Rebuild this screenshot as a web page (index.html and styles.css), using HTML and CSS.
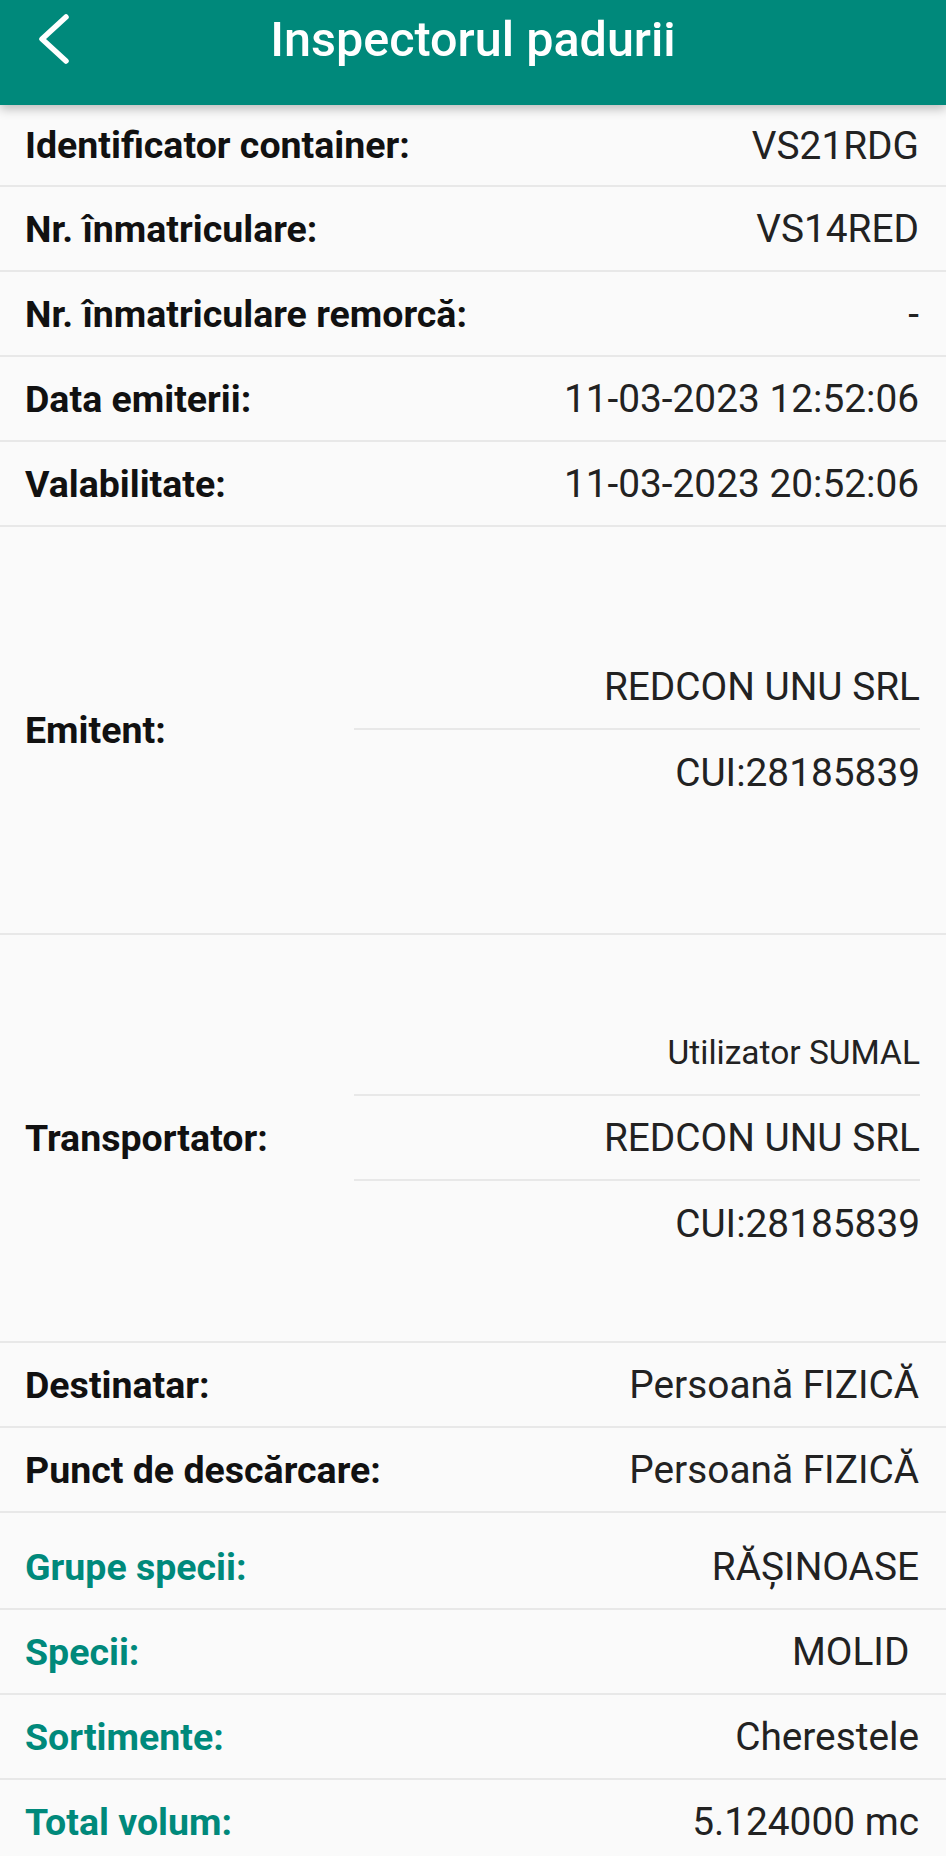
FILE: index.html
```html
<!DOCTYPE html>
<html lang="ro">
<head>
    <meta charset="UTF-8">
    <meta name="viewport" content="width=device-width, initial-scale=1.0">
    <title>Inspectorul padurii</title>
    <link rel="stylesheet" href="styles.css">
</head>
<body>
    <header class="topbar">
        <button class="back" type="button" aria-label="Înapoi">
            <svg width="34" height="52" viewBox="0 0 34 52">
                <polyline points="30,4 6,26 30,48" fill="none" stroke="#fff" stroke-width="5.5" stroke-linecap="round" stroke-linejoin="round"/>
            </svg>
        </button>
        <h1>Inspectorul padurii</h1>
        <span></span>
    </header>
    <main class="details">
        <div class="row first">
            <span class="label">Identificator container:</span>
            <span class="value">VS21RDG</span>
        </div>
        <div class="row">
            <span class="label">Nr. înmatriculare:</span>
            <span class="value">VS14RED</span>
        </div>
        <div class="row">
            <span class="label">Nr. înmatriculare remorcă:</span>
            <span class="value">-</span>
        </div>
        <div class="row">
            <span class="label">Data emiterii:</span>
            <span class="value">11-03-2023 12:52:06</span>
        </div>
        <div class="row">
            <span class="label">Valabilitate:</span>
            <span class="value">11-03-2023 20:52:06</span>
        </div>
        <div class="row block">
            <span class="label">Emitent:</span>
            <div class="sublist">
                <div class="subitem">REDCON UNU SRL</div>
                <div class="subitem">CUI:28185839</div>
            </div>
        </div>
        <div class="row block">
            <span class="label">Transportator:</span>
            <div class="sublist">
                <div class="subitem small">Utilizator SUMAL</div>
                <div class="subitem">REDCON UNU SRL</div>
                <div class="subitem">CUI:28185839</div>
            </div>
        </div>
        <div class="row">
            <span class="label">Destinatar:</span>
            <span class="value">Persoană FIZICĂ</span>
        </div>
        <div class="row">
            <span class="label">Punct de descărcare:</span>
            <span class="value">Persoană FIZICĂ</span>
        </div>
        <div class="row green top-gap">
            <span class="label">Grupe specii:</span>
            <span class="value">RĂȘINOASE</span>
        </div>
        <div class="row green">
            <span class="label">Specii:</span>
            <span class="value">MOLID&nbsp;</span>
        </div>
        <div class="row green">
            <span class="label">Sortimente:</span>
            <span class="value">Cherestele</span>
        </div>
        <div class="row green">
            <span class="label">Total volum:</span>
            <span class="value">5.124000 mc</span>
        </div>
    </main>
</body>
</html>
```

FILE: styles.css
```css
body {
    margin: 0;
    padding: 0;
    font-family: Roboto, "Noto Sans", sans-serif;
    background-color: #fafafa;
    color: #222;
}
.topbar {
    position: relative;
    z-index: 2;
    height: 105px;
    background: #00897b;
    display: grid;
    grid-template-columns: 1fr auto 1fr;
    align-items: start;
    box-shadow: 0 4px 10px rgba(0, 0, 0, 0.25);
}
.back {
    justify-self: start;
    margin: 13px 0 0 36px;
    padding: 0;
    border: none;
    background: none;
    line-height: 0;
    cursor: pointer;
}
.topbar h1 {
    margin: 0;
    padding-top: 12px;
    font-size: 48.5px;
    line-height: 56px;
    font-weight: 500;
    color: #fff;
}
.details {
    margin: 0;
}
.row {
    box-sizing: border-box;
    height: 85px;
    padding: 0 27px 0 25px;
    display: flex;
    align-items: center;
    justify-content: space-between;
    border-bottom: 2px solid #e8e8e8;
}
.row.first {
    height: 82px;
}
.label {
    font-size: 37.5px;
    font-weight: 700;
    color: #111;
    white-space: nowrap;
}
.value {
    font-size: 38.8px;
    color: #222;
    white-space: nowrap;
}
.row.block {
    height: 408px;
}
.sublist {
    width: 566px;
    margin-right: -1px;
}
.subitem {
    box-sizing: border-box;
    height: 85px;
    display: flex;
    align-items: center;
    justify-content: flex-end;
    font-size: 38.8px;
    border-bottom: 2px solid #e8e8e8;
}
.subitem:last-child {
    border-bottom: none;
}
.subitem.small {
    font-size: 33.5px;
}
.row.green .label {
    color: #00897b;
}
.row.top-gap {
    height: 97px;
    padding-top: 12px;
}
```
